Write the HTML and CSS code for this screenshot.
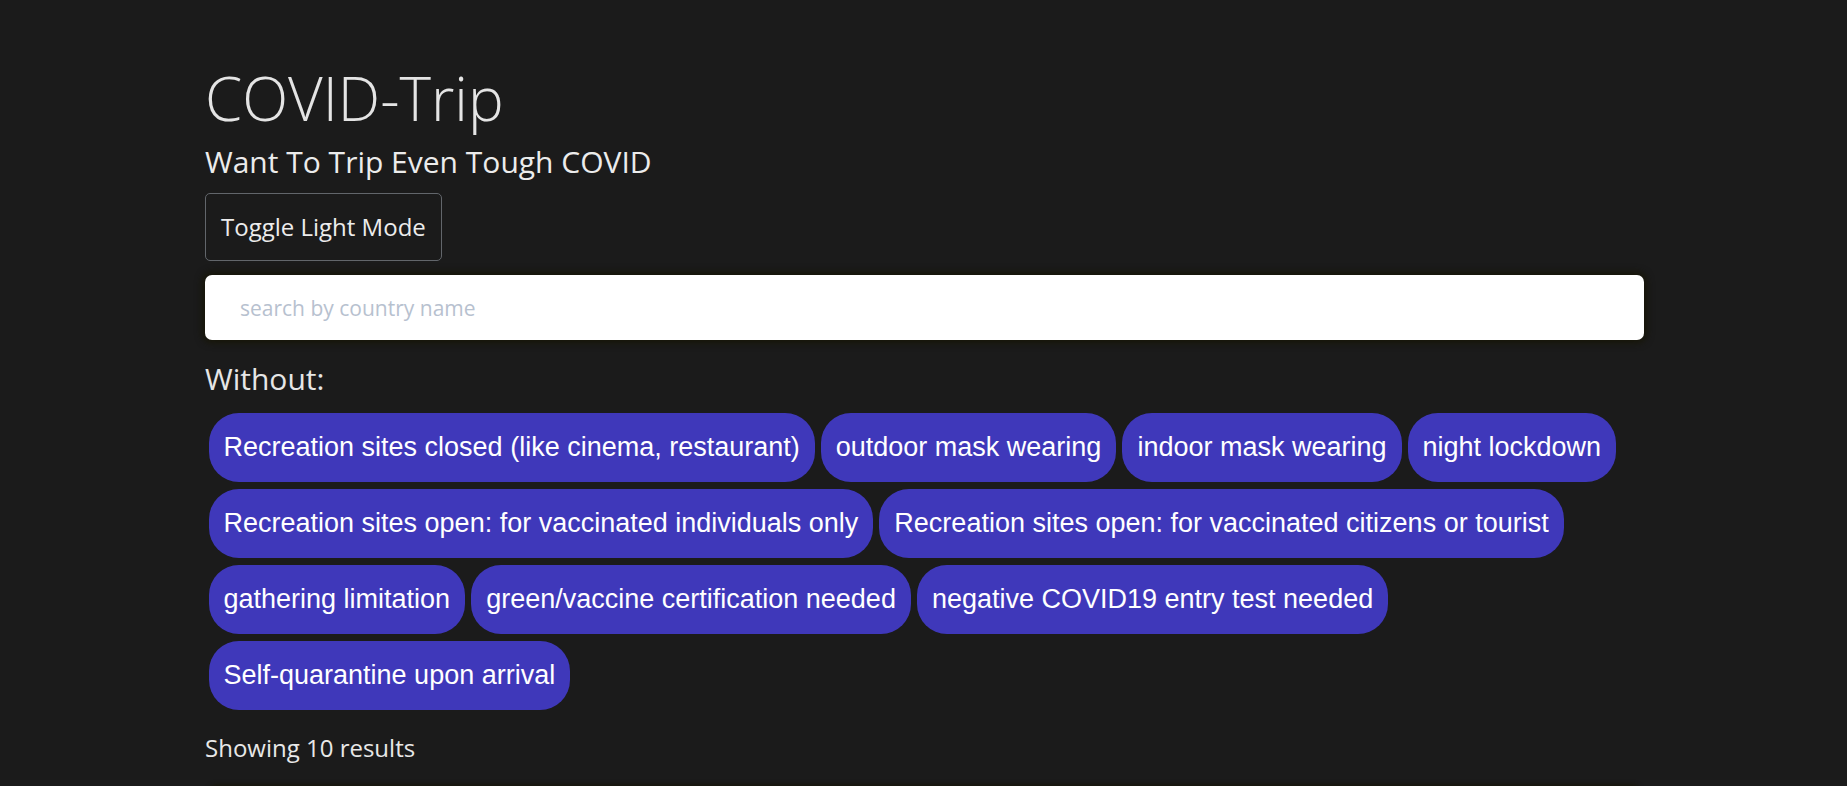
FILE: index.html
```html
<!DOCTYPE html>
<html lang="en">
<head>
<meta charset="utf-8">
<title>COVID-Trip</title>
<link rel="stylesheet" href="styles.css">
</head>
<body>
<main class="page">
  <h1 class="title">COVID-Trip</h1>
  <h2 class="subtitle">Want To Trip Even Tough COVID</h2>
  <button class="toggle" type="button">Toggle Light Mode</button>
  <input class="search" type="text" placeholder="search by country name">
  <h3 class="without">Without:</h3>
  <div class="chips">
    <button class="chip" type="button">Recreation sites closed (like cinema, restaurant)</button>
    <button class="chip" type="button">outdoor mask wearing</button>
    <button class="chip" type="button">indoor mask wearing</button>
    <button class="chip" type="button">night lockdown</button>
    <button class="chip" type="button">Recreation sites open: for vaccinated individuals only</button>
    <button class="chip" type="button">Recreation sites open: for vaccinated citizens or tourist</button>
    <button class="chip" type="button">gathering limitation</button>
    <button class="chip" type="button">green/vaccine certification needed</button>
    <button class="chip" type="button">negative COVID19 entry test needed</button>
    <button class="chip" type="button">Self-quarantine upon arrival</button>
  </div>
  <p class="count">Showing 10 results</p>
  <div class="results">
    <div class="card"></div>
  </div>
</main>
</body>
</html>
```
FILE: styles.css
```css
html, body {
  margin: 0;
  padding: 0;
  background: #1b1b1b;
}

body {
  font-family: "Open Sans", "Liberation Sans", sans-serif;
  color: #e2e2e2;
  overflow: hidden;
}

.page {
  width: 1439px;
  margin: 0 auto;
  padding: 62px 0 0 2px;
  display: flex;
  flex-direction: column;
  align-items: flex-start;
}

.title {
  margin: 0;
  font-size: 60px;
  font-weight: 300;
  line-height: 1.2;
  color: #e4e4e4;
}

.subtitle {
  margin: 10px 0 0;
  font-size: 30px;
  font-weight: 400;
  line-height: 1.2;
  color: #ececec;
}

.toggle {
  margin-top: 13px;
  font-family: "Open Sans", sans-serif;
  font-size: 24px;
  line-height: 36px;
  padding: 15px 15px;
  background: transparent;
  color: #ececec;
  border: 1px solid #62666b;
  border-radius: 5px;
}

.search {
  box-sizing: border-box;
  margin-top: 14px;
  width: 100%;
  height: 65px;
  padding: 0 35px;
  border: none;
  border-radius: 7px;
  background: #ffffff;
  font-family: "Open Sans", sans-serif;
  font-size: 21px;
  color: #333;
  box-shadow: 0 0 7px 3px rgba(22, 20, 2, 0.75);
  outline: none;
}

.search::placeholder {
  color: #b7c1cf;
}

.without {
  margin: 21px 0 0;
  font-size: 30px;
  font-weight: 400;
  line-height: 1.2;
  color: #e6e6e6;
}

.chips {
  margin-top: 12px;
  display: flex;
  flex-wrap: wrap;
  width: 100%;
  padding-left: 0.5px;
  box-sizing: border-box;
}

.chip {
  margin: 3.5px 3px;
  padding: 19px 15px;
  font-family: "Liberation Sans", Arial, sans-serif;
  font-size: 27px;
  line-height: 31px;
  color: #ffffff;
  background: #3f38ba;
  border: none;
  border-radius: 30px;
  white-space: nowrap;
}

.count {
  margin: 17px 0 0;
  font-size: 24px;
  line-height: 1.5;
  color: #e8e8e8;
}

.results {
  margin-top: 21px;
  width: 100%;
  display: flex;
  flex-direction: column;
  padding: 0 6px;
  box-sizing: border-box;
}

.card {
  height: 200px;
  background: #1b1b1b;
  box-shadow: 0 0 5px 2px rgba(22, 20, 2, 0.8);
  border-radius: 6px;
}
```
